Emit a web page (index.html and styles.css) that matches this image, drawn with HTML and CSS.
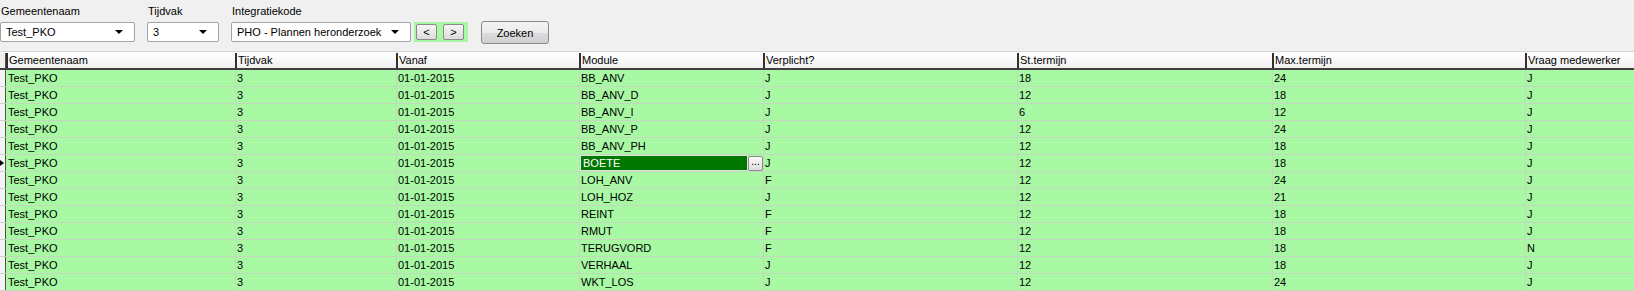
FILE: index.html
```html
<!DOCTYPE html>
<html lang="nl">
<head>
<meta charset="utf-8">
<title>Integratie</title>
<link rel="stylesheet" href="styles.css">
</head>
<body>
<div class="toolbar">
  <div class="field f-gem">
    <div class="label">Gemeentenaam</div>
    <div class="combo"><span>Test_PKO</span><i class="arrow"></i></div>
  </div>
  <div class="field f-tijd">
    <div class="label">Tijdvak</div>
    <div class="combo"><span>3</span><i class="arrow"></i></div>
  </div>
  <div class="field f-int">
    <div class="label">Integratiekode</div>
    <div class="row-ctl">
      <div class="combo"><span>PHO - Plannen heronderzoek</span><i class="arrow"></i></div>
      <div class="nav">
        <button class="navbtn">&lt;</button>
        <button class="navbtn">&gt;</button>
      </div>
      <button class="zoeken">Zoeken</button>
    </div>
  </div>
</div>

<div class="grid">
  <div class="hrow">
    <div class="ind"></div>
    <div class="hc">Gemeentenaam</div>
    <div class="hc">Tijdvak</div>
    <div class="hc">Vanaf</div>
    <div class="hc">Module</div>
    <div class="hc">Verplicht?</div>
    <div class="hc">St.termijn</div>
    <div class="hc">Max.termijn</div>
    <div class="hc">Vraag medewerker</div>
  </div>
  <div class="drow"><div class="ind"></div><div class="c">Test_PKO</div><div class="c">3</div><div class="c">01-01-2015</div><div class="c">BB_ANV</div><div class="c">J</div><div class="c">18</div><div class="c">24</div><div class="c">J</div></div>
  <div class="drow"><div class="ind"></div><div class="c">Test_PKO</div><div class="c">3</div><div class="c">01-01-2015</div><div class="c">BB_ANV_D</div><div class="c">J</div><div class="c">12</div><div class="c">18</div><div class="c">J</div></div>
  <div class="drow"><div class="ind"></div><div class="c">Test_PKO</div><div class="c">3</div><div class="c">01-01-2015</div><div class="c">BB_ANV_I</div><div class="c">J</div><div class="c">6</div><div class="c">12</div><div class="c">J</div></div>
  <div class="drow"><div class="ind"></div><div class="c">Test_PKO</div><div class="c">3</div><div class="c">01-01-2015</div><div class="c">BB_ANV_P</div><div class="c">J</div><div class="c">12</div><div class="c">24</div><div class="c">J</div></div>
  <div class="drow"><div class="ind"></div><div class="c">Test_PKO</div><div class="c">3</div><div class="c">01-01-2015</div><div class="c">BB_ANV_PH</div><div class="c">J</div><div class="c">12</div><div class="c">18</div><div class="c">J</div></div>
  <div class="drow current"><div class="ind"><i class="tri"></i></div><div class="c">Test_PKO</div><div class="c">3</div><div class="c">01-01-2015</div><div class="c sel"><span class="seltext">BOETE</span><span class="ell">...</span></div><div class="c">J</div><div class="c">12</div><div class="c">18</div><div class="c">J</div></div>
  <div class="drow"><div class="ind"></div><div class="c">Test_PKO</div><div class="c">3</div><div class="c">01-01-2015</div><div class="c">LOH_ANV</div><div class="c">F</div><div class="c">12</div><div class="c">24</div><div class="c">J</div></div>
  <div class="drow"><div class="ind"></div><div class="c">Test_PKO</div><div class="c">3</div><div class="c">01-01-2015</div><div class="c">LOH_HOZ</div><div class="c">J</div><div class="c">12</div><div class="c">21</div><div class="c">J</div></div>
  <div class="drow"><div class="ind"></div><div class="c">Test_PKO</div><div class="c">3</div><div class="c">01-01-2015</div><div class="c">REINT</div><div class="c">F</div><div class="c">12</div><div class="c">18</div><div class="c">J</div></div>
  <div class="drow"><div class="ind"></div><div class="c">Test_PKO</div><div class="c">3</div><div class="c">01-01-2015</div><div class="c">RMUT</div><div class="c">F</div><div class="c">12</div><div class="c">18</div><div class="c">J</div></div>
  <div class="drow"><div class="ind"></div><div class="c">Test_PKO</div><div class="c">3</div><div class="c">01-01-2015</div><div class="c">TERUGVORD</div><div class="c">F</div><div class="c">12</div><div class="c">18</div><div class="c">N</div></div>
  <div class="drow"><div class="ind"></div><div class="c">Test_PKO</div><div class="c">3</div><div class="c">01-01-2015</div><div class="c">VERHAAL</div><div class="c">J</div><div class="c">12</div><div class="c">18</div><div class="c">J</div></div>
  <div class="drow"><div class="ind"></div><div class="c">Test_PKO</div><div class="c">3</div><div class="c">01-01-2015</div><div class="c">WKT_LOS</div><div class="c">J</div><div class="c">12</div><div class="c">24</div><div class="c">J</div></div>
</div>
</body>
</html>
```

FILE: styles.css
```css
html, body {
  margin: 0;
  padding: 0;
  background: #f0f0f0;
  font-family: "Liberation Sans", Arial, sans-serif;
  font-size: 11px;
  color: #000;
  overflow: hidden;
}

.toolbar {
  display: flex;
  height: 51px;
  box-sizing: border-box;
  padding-top: 6px;
}

.label {
  height: 16px;
  line-height: 11px;
  padding-left: 1px;
}

.f-gem { width: 147px; }
.f-gem .combo { width: 135px; }
.f-tijd { width: 84px; }
.f-tijd .combo { width: 72px; }
.f-int .combo { width: 180px; }

.combo {
  position: relative;
  height: 20px;
  box-sizing: border-box;
  border: 1px solid #a2a2a2;
  border-radius: 2px;
  background: #fff;
  padding-left: 5px;
  line-height: 18px;
  white-space: nowrap;
}

.arrow {
  position: absolute;
  right: 11px;
  top: 7px;
  width: 0;
  height: 0;
  border-left: 4px solid transparent;
  border-right: 4px solid transparent;
  border-top: 4px solid #000;
}

.row-ctl {
  display: flex;
  align-items: flex-start;
}

.nav {
  margin-left: 3px;
  width: 54px;
  height: 20px;
  background: #a8f8a4;
  display: flex;
  align-items: center;
  gap: 6px;
  padding-left: 2px;
  box-sizing: border-box;
}

.navbtn {
  width: 21px;
  height: 16px;
  padding: 0;
  margin: 0;
  box-sizing: border-box;
  border: 1px solid #8a8a8a;
  border-radius: 2px;
  background: linear-gradient(#f6f6f6, #dcdcdc);
  font-family: "Liberation Sans", Arial, sans-serif;
  font-size: 11px;
  line-height: 13px;
  color: #000;
}

.zoeken {
  margin-left: 13px;
  margin-top: -1px;
  width: 68px;
  height: 23px;
  padding: 0;
  box-sizing: border-box;
  border: 1px solid #8a8a8a;
  border-radius: 3px;
  background: linear-gradient(#f4f4f4 0%, #ebebeb 50%, #dcdcdc 51%, #d0d0d0 100%);
  font-family: "Liberation Sans", Arial, sans-serif;
  font-size: 11px;
  color: #000;
}

.grid {
  border-top: 1px solid #d4d4d4;
}

.hrow, .drow {
  display: grid;
  grid-template-columns: 6px 229px 161px 183px 184px 254px 255px 253px 1fr;
}

.hrow {
  height: 18px;
  box-sizing: border-box;
  background: linear-gradient(#ffffff, #f0f0f0);
  border-top: 1px solid #ffffff;
  border-bottom: 2px solid #404040;
}

.hc {
  border-left: 2px solid #303030;
  padding-left: 1px;
  line-height: 15px;
  white-space: nowrap;
  overflow: hidden;
}

.hrow .ind {
  background: #f0f0f0;
}

.drow {
  height: 17px;
  box-sizing: border-box;
  border-bottom: 1px solid #c4d8c0;
  background: #a8f8a4;
}

.ind {
  background: #f4f4f4;
  border-right: 1px solid #505050;
  position: relative;
}

.c {
  border-left: 1px solid #c4d8c0;
  padding-left: 1px;
  line-height: 16px;
  white-space: nowrap;
  overflow: hidden;
}

.drow .c:nth-child(2) { border-left: none; padding-left: 2px; }

.tri {
  position: absolute;
  left: 0;
  top: 5px;
  width: 0;
  height: 0;
  border-top: 3px solid transparent;
  border-bottom: 3px solid transparent;
  border-left: 4px solid #000;
}

.sel {
  display: flex;
  padding-left: 0;
  background: #a8f8a4;
}

.seltext {
  flex: 1;
  background: #007800;
  color: #fff;
  padding-left: 2px;
  border: 1px solid #d8e8d8;
  box-sizing: border-box;
  height: 16px;
  line-height: 14px;
}

.ell {
  width: 15px;
  height: 15px;
  box-sizing: border-box;
  border: 1px solid #8a8a8a;
  border-radius: 2px;
  background: linear-gradient(#fafafa, #dedede);
  font-size: 10px;
  line-height: 10px;
  text-align: center;
  color: #000;
  margin-top: 1px;
}
```
